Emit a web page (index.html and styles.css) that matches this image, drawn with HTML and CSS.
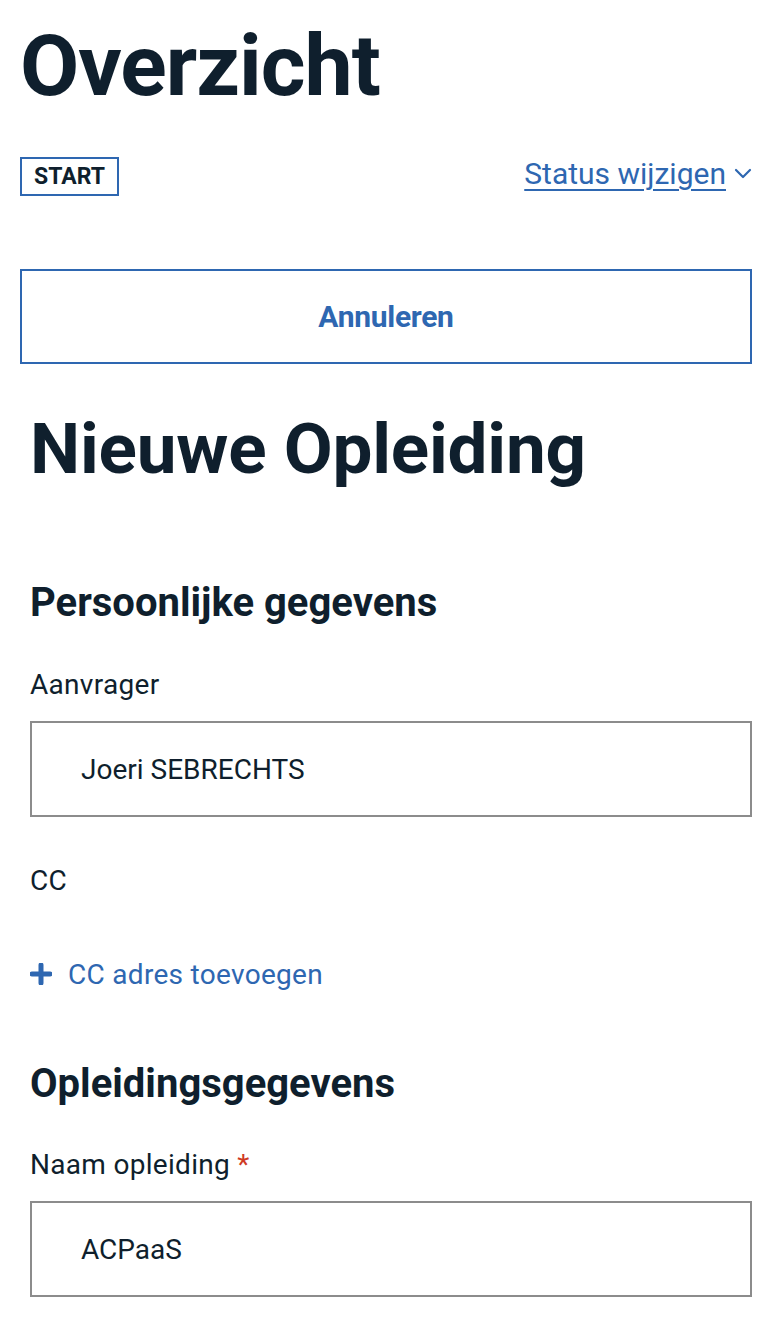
FILE: index.html
```html
<!DOCTYPE html>
<html lang="nl">
<head>
<meta charset="utf-8">
<title>Overzicht</title>
<link rel="stylesheet" href="styles.css">
</head>
<body>
<main class="page">
  <h1 class="title">Overzicht</h1>
  <div class="status-row">
    <span class="tag">START</span>
    <a class="status-link" href="#"><span class="status-text">Status wijzigen</span>
      <svg class="chevron" width="18" height="12" viewBox="0 0 18 12"><path d="M2 2 L9 9 L16 2" fill="none" stroke="#2e67b1" stroke-width="2.2" stroke-linecap="round" stroke-linejoin="round"/></svg>
    </a>
  </div>
  <button class="btn-outline" type="button">Annuleren</button>

  <form class="form">
    <h2 class="form-title">Nieuwe Opleiding</h2>

    <h3 class="section-title">Persoonlijke gegevens</h3>
    <label class="label">Aanvrager</label>
    <div class="input">Joeri SEBRECHTS</div>

    <label class="label label-cc">CC</label>
    <a class="add-link" href="#">
      <svg class="plus" width="22" height="22" viewBox="0 0 22 22"><path d="M11 2 V20 M2 11 H20" stroke="#2e67b1" stroke-width="5" stroke-linecap="round"/></svg>
      <span>CC adres toevoegen</span>
    </a>

    <h3 class="section-title section-title-2">Opleidingsgegevens</h3>
    <label class="label label-naam">Naam opleiding <span class="req">*</span></label>
    <div class="input">ACPaaS</div>
  </form>
</main>
</body>
</html>
```

FILE: styles.css
```css
* { box-sizing: border-box; }
html, body { margin: 0; padding: 0; background: #fff; }
body {
  font-family: Roboto, "Noto Sans", sans-serif;
  color: #0f1f2d;
}
.page {
  padding: 0 26px 0 20px;
}
.title {
  margin: 0;
  padding-top: 19px;
  font-size: 86px;
  line-height: 1.1;
  font-weight: 700;
  letter-spacing: -1px;
}
.status-row {
  display: flex;
  justify-content: space-between;
  align-items: center;
  margin-top: 43px;
}
.tag {
  display: inline-block;
  border: 2px solid #2e67b1;
  height: 39px;
  width: 99px;
  text-align: center;
  font-size: 23px;
  font-weight: 700;
  line-height: 35px;
  color: #0f1f2d;
}
.status-link {
  display: flex;
  align-items: center;
  gap: 8px;
  color: #2e67b1;
  text-decoration: none;
  font-size: 30px;
  margin-top: -6px;
}
.status-text {
  text-decoration: underline;
  text-decoration-thickness: 2px;
  text-underline-offset: 5px;
}
.chevron { margin-top: 2px; }
.btn-outline {
  display: block;
  width: 100%;
  height: 95px;
  margin-top: 73px;
  background: #fff;
  border: 2px solid #2e67b1;
  color: #2e67b1;
  font-family: Roboto, "Noto Sans", sans-serif;
  font-size: 30px;
  font-weight: 700;
  letter-spacing: -0.3px;
}
.form {
  padding-left: 10px;
}
.form-title {
  margin: 46px 0 0;
  font-size: 71px;
  line-height: 1.1;
  font-weight: 700;
  letter-spacing: -0.2px;
}
.section-title {
  margin: 91px 0 0;
  font-size: 40px;
  line-height: 1.2;
  font-weight: 700;
}
.section-title-2 { margin-top: 69px; }
.label {
  display: block;
  margin-top: 41px;
  font-size: 28px;
  line-height: 1.2;
  letter-spacing: 0.3px;
}
.label-naam { margin-top: 40px; }
.req { color: #cf3a24; }
.input {
  margin-top: 20px;
  height: 96px;
  border: 2px solid #8c8c8c;
  padding-left: 49px;
  display: flex;
  align-items: center;
  font-size: 28px;
}
.label-cc { margin-top: 47px; }
.add-link {
  display: flex;
  align-items: center;
  gap: 16px;
  margin-top: 60px;
  color: #2e67b1;
  text-decoration: none;
  font-size: 28px;
  letter-spacing: 0.3px;
}
```
